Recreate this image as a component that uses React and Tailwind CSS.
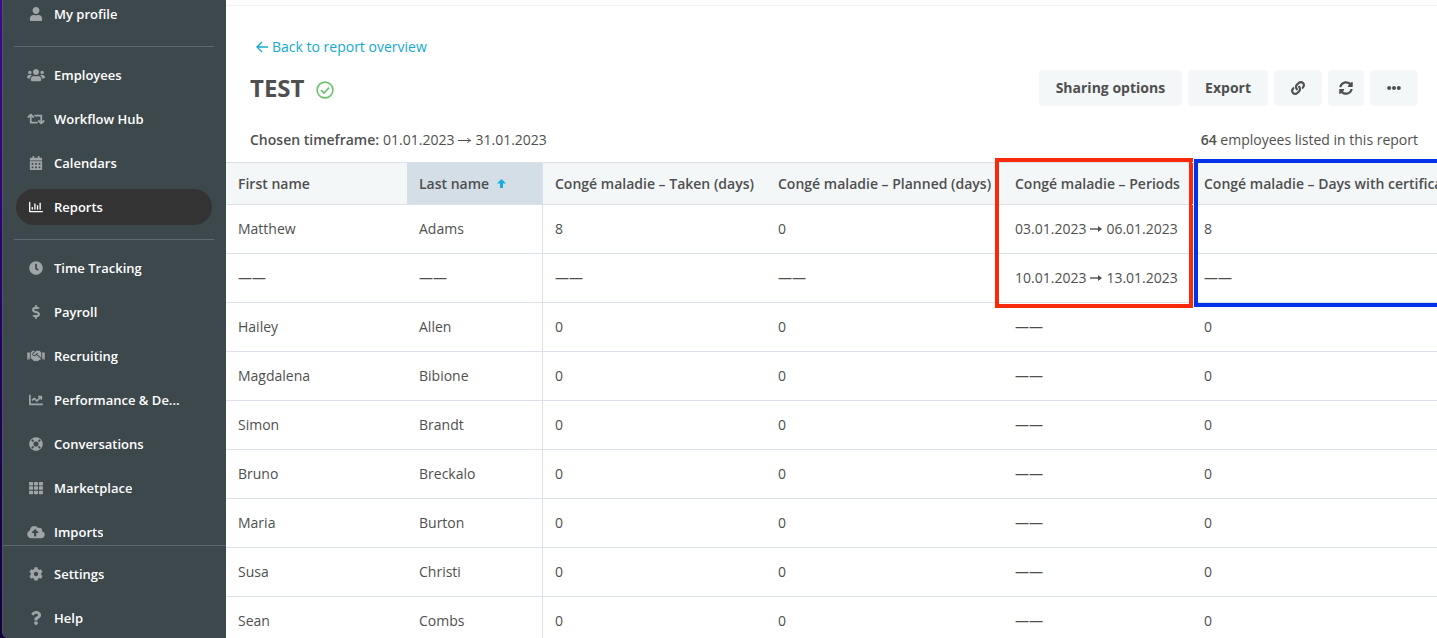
import React, { useState } from 'react';
import {
  FaUser,
  FaUsers,
  FaRetweet,
  FaCalendarAlt,
  FaRegChartBar,
  FaClock,
  FaDollarSign,
  FaHandshake,
  FaChartLine,
  FaLifeRing,
  FaTh,
  FaCloudUploadAlt,
  FaCog,
  FaQuestion,
  FaLink,
  FaSyncAlt,
  FaEllipsisH,
} from 'react-icons/fa';

const navGroups = [
  [{ name: 'My profile', icon: FaUser }],
  [
    { name: 'Employees', icon: FaUsers },
    { name: 'Workflow Hub', icon: FaRetweet },
    { name: 'Calendars', icon: FaCalendarAlt },
    { name: 'Reports', icon: FaRegChartBar },
  ],
  [
    { name: 'Time Tracking', icon: FaClock },
    { name: 'Payroll', icon: FaDollarSign },
    { name: 'Recruiting', icon: FaHandshake },
    { name: 'Performance & De...', icon: FaChartLine },
    { name: 'Conversations', icon: FaLifeRing },
    { name: 'Marketplace', icon: FaTh },
    { name: 'Imports', icon: FaCloudUploadAlt },
  ],
];

const footerItems = [
  { name: 'Settings', icon: FaCog },
  { name: 'Help', icon: FaQuestion },
];

const EMPTY = '——';

const rows = [
  ['Matthew', 'Adams', '8', '0', ['03.01.2023', '06.01.2023'], '8'],
  [EMPTY, EMPTY, EMPTY, EMPTY, ['10.01.2023', '13.01.2023'], EMPTY],
  ['Hailey', 'Allen', '0', '0', null, '0'],
  ['Magdalena', 'Bibione', '0', '0', null, '0'],
  ['Simon', 'Brandt', '0', '0', null, '0'],
  ['Bruno', 'Breckalo', '0', '0', null, '0'],
  ['Maria', 'Burton', '0', '0', null, '0'],
  ['Susa', 'Christi', '0', '0', null, '0'],
  ['Sean', 'Combs', '0', '0', null, '0'],
];

const NavItem = ({ item, active, onSelect }) => {
  const Icon = item.icon;
  return (
    <a
      href="#"
      onClick={(e) => {
        e.preventDefault();
        onSelect(item.name);
      }}
      className={`flex h-9 shrink-0 items-center gap-1.5 rounded-full pl-2 pr-6 text-[13px] leading-5 font-semibold text-white ${
        active ? 'bg-[#333333]' : ''
      }`}
    >
      <span className={`flex w-6 shrink-0 justify-center ${active ? 'text-white' : 'text-[#9ea4a7]'}`}>
        <Icon className="h-3.5 w-[18px]" />
      </span>
      <span className="truncate">{item.name}</span>
    </a>
  );
};

const Sidebar = () => {
  const [current, setCurrent] = useState('Reports');

  return (
    <aside className="flex w-[226px] shrink-0 bg-gradient-to-b from-[#3d0a91] to-[#12003c] pl-0.5">
      <div className="flex min-w-0 flex-1 flex-col rounded-bl-md border-l border-[#4d5560] bg-[#3d484d]">
        <nav className="-mt-1 flex min-h-0 flex-1 flex-col overflow-hidden pl-[13px] pr-3.5">
          {navGroups.map((group, i) => (
            <div
              key={i}
              className={`flex shrink-0 flex-col gap-2 ${
                i > 0 ? 'mt-3.5 -mx-0.5 border-t border-[#5f696d] px-0.5 pt-2.5' : ''
              }`}
            >
              {group.map((item) => (
                <NavItem key={item.name} item={item} active={item.name === current} onSelect={setCurrent} />
              ))}
            </div>
          ))}
        </nav>
        <div className="flex flex-col gap-2 border-t border-[#5f696d] pb-0.5 pl-[13px] pr-3.5 pt-2.5">
          {footerItems.map((item) => (
            <NavItem key={item.name} item={item} active={item.name === current} onSelect={setCurrent} />
          ))}
        </div>
      </div>
    </aside>
  );
};

const ToolbarButton = ({ children, className = 'px-[17px]', label }) => (
  <button
    type="button"
    aria-label={label}
    className={`flex h-9 items-center justify-center rounded bg-[#f3f7f8] text-sm font-bold text-[#4f4f4f] ${className}`}
  >
    {children}
  </button>
);

const ArrowLeft = () => (
  <svg width="12" height="12" viewBox="0 0 12 12" fill="none" stroke="currentColor" strokeWidth="1.3">
    <path d="M6 1L1 6l5 5M1 6h11" />
  </svg>
);

const ThinArrow = () => (
  <svg width="13" height="8" viewBox="0 0 13 8" className="inline-block" role="img" aria-label="to">
    <path d="M0 4.500h12M9.500 2C10.300 3.500 11.400 4.200 13 4.500c-1.600.3-2.700 1-3.500 2.500" fill="none" stroke="currentColor" />
  </svg>
);

const BoldArrow = () => (
  <svg width="12" height="8" viewBox="0 0 12 8" className="inline-block" role="img" aria-label="to">
    <path d="M0 4h9" stroke="currentColor" strokeWidth="1.4" />
    <path d="M8 1l4 3-4 3z" fill="currentColor" />
  </svg>
);

const Period = ({ range }) => {
  if (!range) return EMPTY;
  return (
    <span className="flex items-center gap-1">
      {range[0]}
      <BoldArrow />
      {range[1]}
    </span>
  );
};

const ReportTable = () => (
  <table className="w-full min-w-[1260px] table-fixed border-separate border-spacing-0 whitespace-nowrap text-left text-sm text-[#4f4f4f]">
    <colgroup>
      <col className="w-[181px]" />
      <col className="w-[136px]" />
      <col className="w-[223px]" />
      <col className="w-[237px]" />
      <col className="w-[189px]" />
      <col />
    </colgroup>
    <thead className="bg-[#f3f7f8]">
      <tr className="h-[43px] [&>th]:border-y [&>th]:border-[#dce1e7] [&>th]:px-3 [&>th]:font-semibold">
        <th>First name</th>
        <th className="border-r bg-[#d4dee7]">
          <button type="button" className="flex items-center gap-2">
            Last name
            <svg width="9" height="9" viewBox="0 0 9 9" className="text-[#14afdc]">
              <path d="M4.500 0L9 4.500H6V9H3V4.500H0z" fill="currentColor" />
            </svg>
          </button>
        </th>
        <th>Congé maladie – Taken (days)</th>
        <th>Congé maladie – Planned (days)</th>
        <th className="relative">
          Congé maladie – Periods
          <span className="pointer-events-none absolute -left-2 -right-px -top-[5px] h-[150px] border-4 border-[#f92a0c]" />
        </th>
        <th className="relative">
          Congé maladie – Days with certificate
          <span className="pointer-events-none absolute -top-1 left-0.5 right-0 h-[148px] border-4 border-[#0432e8]" />
        </th>
      </tr>
    </thead>
    <tbody>
      {rows.map((row, index) => (
        <tr key={index} className="h-[49px] [&>td]:border-b [&>td]:border-[#dce1e7] [&>td]:px-3">
          <td>{row[0]}</td>
          <td className="border-r">{row[1]}</td>
          <td>{row[2]}</td>
          <td>{row[3]}</td>
          <td>
            <Period range={row[4]} />
          </td>
          <td>{row[5]}</td>
        </tr>
      ))}
    </tbody>
  </table>
);

const App = () => {
  return (
    <div className="flex h-screen overflow-hidden bg-white font-['Open_Sans',sans-serif] text-[#4f4f4f]">
      <Sidebar />
      <main className="min-w-0 flex-1 overflow-hidden border-t-[5px] border-white">
        {/* Header */}
        <div className="border-t border-[#f1f2f3] pl-6 pr-[19px] pt-[29px]">
          <a href="#" className="ml-1.5 flex h-6 w-fit items-center gap-1 text-sm text-[#14a9cf]">
            <ArrowLeft />
            Back to report overview
          </a>
          <div className="mt-[11px] flex h-9 items-center justify-between">
            <div className="flex items-center gap-3">
              <h1 className="text-2xl font-bold">TEST</h1>
              <svg
                width="18"
                height="18"
                viewBox="0 0 18 18"
                fill="none"
                stroke="#6dc36d"
                strokeWidth="1.600"
                className="mt-1"
              >
                <circle cx="9" cy="9" r="7.900" />
                <path d="M5 9.200l3 2.800 5-5.300" strokeWidth="1.700" />
              </svg>
            </div>
            <div className="flex gap-1.5">
              <ToolbarButton>Sharing options</ToolbarButton>
              <ToolbarButton>Export</ToolbarButton>
              <ToolbarButton className="w-12" label="Copy link">
                <FaLink size={14} />
              </ToolbarButton>
              <ToolbarButton className="w-9" label="Refresh">
                <FaSyncAlt size={14} />
              </ToolbarButton>
              <ToolbarButton className="w-12" label="More">
                <FaEllipsisH size={14} />
              </ToolbarButton>
            </div>
          </div>
          <div className="mb-3 mt-6 flex h-5 items-center justify-between text-sm">
            <p className="flex items-center gap-1">
              <span className="font-semibold">Chosen timeframe:</span> 01.01.2023 <ThinArrow /> 31.01.2023
            </p>
            <p>
              <span className="font-semibold">64</span> employees listed in this report
            </p>
          </div>
        </div>

        <ReportTable />
      </main>
    </div>
  );
};

export default App;
